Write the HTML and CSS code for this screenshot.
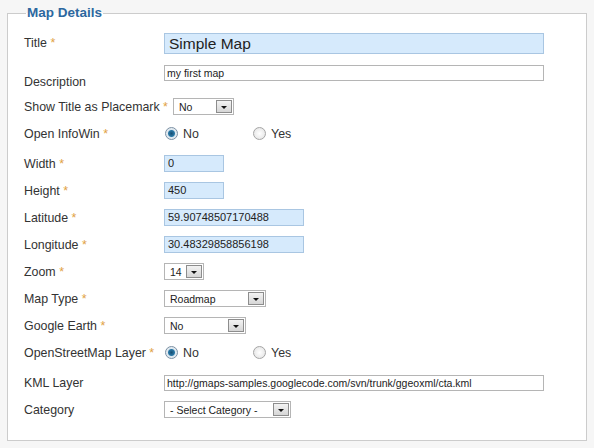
FILE: index.html
```html
<!DOCTYPE html>
<html lang="en">
<head>
  <meta charset="UTF-8">
  <title>Map Details</title>
  <link rel="stylesheet" href="styles.css">
</head>
<body>

<fieldset class="details">
  <legend>Map Details</legend>

  <!-- title -->
  <div class="row row-title">
    <div class="label">Title <span class="req">*</span></div>
    <div class="field"><div class="text big wide">Simple Map</div></div>
  </div>

  <div class="row row-desc">
    <div class="label">Description</div>
    <div class="field"><div class="text plain wide">my first map</div></div>
  </div>

  <div class="row">
    <div class="label">Show Title as Placemark <span class="req">*</span></div>
    <div class="field"><div class="select" style="width:61px"><span>No</span><span class="arrow"></span></div></div>
  </div>

  <div class="row row-radio">
    <div class="label">Open InfoWin <span class="req">*</span></div>
    <div class="field radios">
      <span class="radio on"></span><span class="opt">No</span>
      <span class="radio"></span><span class="opt">Yes</span>
    </div>
  </div>

  <div class="row">
    <div class="label">Width <span class="req">*</span></div>
    <div class="field"><div class="text short">0</div></div>
  </div>

  <div class="row">
    <div class="label">Height <span class="req">*</span></div>
    <div class="field"><div class="text short">450</div></div>
  </div>

  <div class="row">
    <div class="label">Latitude <span class="req">*</span></div>
    <div class="field"><div class="text mid">59.90748507170488</div></div>
  </div>

  <div class="row">
    <div class="label">Longitude <span class="req">*</span></div>
    <div class="field"><div class="text mid">30.48329858856198</div></div>
  </div>

  <div class="row">
    <div class="label">Zoom <span class="req">*</span></div>
    <div class="field"><div class="select" style="width:40px"><span>14</span><span class="arrow"></span></div></div>
  </div>

  <div class="row">
    <div class="label">Map Type <span class="req">*</span></div>
    <div class="field"><div class="select" style="width:102px"><span>Roadmap</span><span class="arrow"></span></div></div>
  </div>

  <div class="row">
    <div class="label">Google Earth <span class="req">*</span></div>
    <div class="field"><div class="select" style="width:82px"><span>No</span><span class="arrow"></span></div></div>
  </div>

  <div class="row">
    <div class="label">OpenStreetMap Layer <span class="req">*</span></div>
    <div class="field radios">
      <span class="radio on"></span><span class="opt">No</span>
      <span class="radio"></span><span class="opt">Yes</span>
    </div>
  </div>

  <div class="row row-kml">
    <div class="label">KML Layer</div>
    <div class="field"><div class="text plain wide">http://gmaps-samples.googlecode.com/svn/trunk/ggeoxml/cta.kml</div></div>
  </div>

  <div class="row">
    <div class="label">Category</div>
    <div class="field"><div class="select" style="width:127px"><span>- Select Category -</span><span class="arrow"></span></div></div>
  </div>
</fieldset>

</body>
</html>
```

FILE: styles.css
```css
/* page */
body {
  margin: 0;
  background: #f6f6f6;
  font-family: "Liberation Sans", Arial, sans-serif;
  font-size: 12.4px;
  color: #333;
}

/* outer box */
.details {
  margin: 5px 7px 0 7px;
  padding: 3px 16px 0 16px;
  border: 1px solid #ccc;
  background: #fff;
  height: 436px;
  box-sizing: border-box;
}
.details legend {
  margin-left: 2px;
  padding: 0 1px;
  font-size: 13.5px;
  line-height: 16px;
  font-weight: bold;
  color: #2c68a0;
}

/* rows */
.row {
  display: flex;
  align-items: center;
  height: 27px;
}
.row-title { height: 38px; }
.row-desc {
  height: 27px;
  align-items: flex-end;
  margin-bottom: 4px;
}
.row-radio { margin-bottom: 3px; }
.row-kml { margin-top: 3px; }

.label {
  min-width: 135px;
  padding-right: 5px;
  flex: none;
  white-space: nowrap;
}
.req { color: #dfa245; }

.field {
  display: flex;
  align-items: center;
}
.row-desc .field {
  align-self: flex-start;
  padding-top: 3px;
}

/* text inputs */
.text {
  box-sizing: border-box;
  height: 17px;
  line-height: 15px;
  padding: 0 3px;
  border: 1px solid #a9c6e2;
  background: #d6eafc;
  font-size: 11px;
  color: #222;
  white-space: nowrap;
  overflow: hidden;
}
.text.big {
  height: 21px;
  line-height: 19px;
  font-size: 15.5px;
  padding: 0 4px;
}
.text.plain {
  height: 16px;
  line-height: 14px;
  padding: 0 2px;
  background: #fff;
  border-color: #b5b5b5;
  font-size: 10.5px;
}
.wide { width: 380px; }
.short { width: 60px; }
.mid { width: 140px; }

/* selects */
.select {
  box-sizing: border-box;
  display: flex;
  align-items: center;
  justify-content: space-between;
  height: 17px;
  padding: 0 1px 0 5px;
  border: 1px solid #b5b5b5;
  background: #fff;
  font-size: 10.5px;
  color: #222;
  white-space: nowrap;
}
.select .arrow {
  box-sizing: border-box;
  flex: none;
  width: 16px;
  height: 13px;
  border: 1px solid #8d8d8d;
  background: linear-gradient(#f3f3f3, #d6d6d6);
  position: relative;
}
.select .arrow::after {
  content: "";
  position: absolute;
  left: 4px;
  top: 5px;
  border-left: 3px solid transparent;
  border-right: 3px solid transparent;
  border-top: 3px solid #111;
}

/* radios */
.radio {
  box-sizing: border-box;
  flex: none;
  width: 13px;
  height: 13px;
  border-radius: 50%;
  border: 1px solid #a5a5a5;
  background: radial-gradient(circle, #fff 0, #e0e0e0 100%);
  margin-left: 1px;
}
.radio.on {
  border-color: #7b90a4;
  background: radial-gradient(circle, #174f73 0, #2a78a6 3px, #dce7ef 4px, #f4f4f4 100%);
}
.opt {
  margin-left: 5px;
  width: 69px;
}
```
